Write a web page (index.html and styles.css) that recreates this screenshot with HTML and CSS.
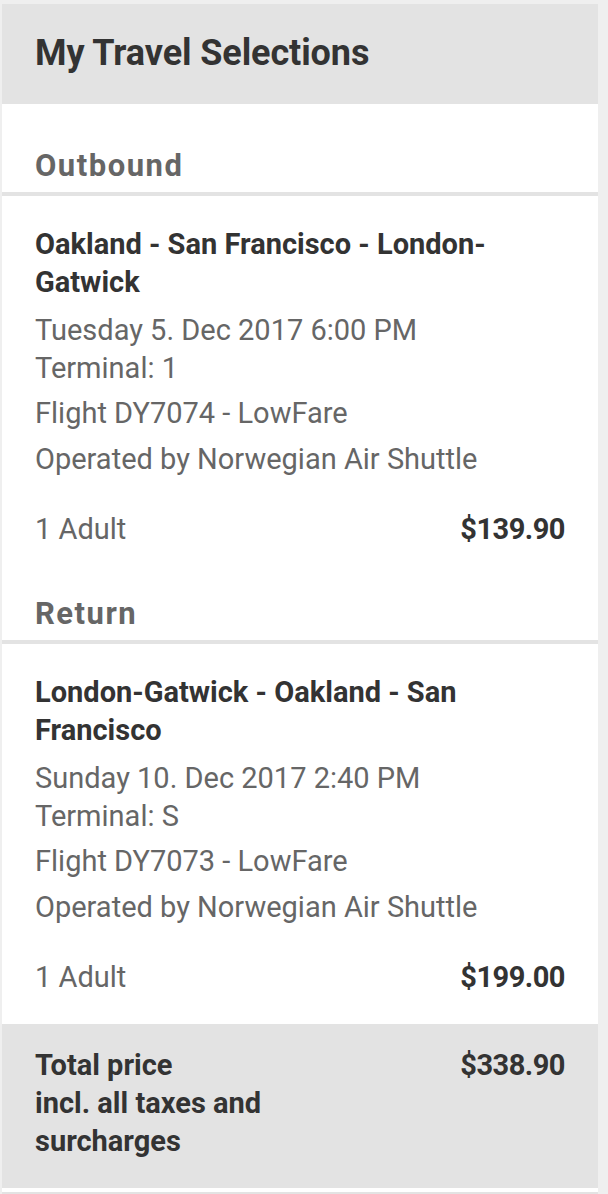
FILE: index.html
```html
<!DOCTYPE html>
<html lang="en">
<head>
<meta charset="utf-8">
<title>My Travel Selections</title>
<link rel="stylesheet" href="styles.css">
</head>
<body>
<div class="panel">
  <div class="panel-header">
    <h1 class="panel-title">My Travel Selections</h1>
  </div>

  <div class="leg-label">Outbound</div>
  <div class="leg">
    <div class="route">Oakland - San Francisco - London-Gatwick</div>
    <div class="detail when">Tuesday 5. Dec 2017 6:00 PM<br>Terminal: 1</div>
    <div class="detail flight">Flight DY7074 - LowFare</div>
    <div class="detail operator">Operated by Norwegian Air Shuttle</div>
    <div class="pax-row">
      <span class="pax">1 Adult</span>
      <span class="price">$139.90</span>
    </div>
  </div>

  <div class="leg-label">Return</div>
  <div class="leg leg-last">
    <div class="route">London-Gatwick - Oakland - San Francisco</div>
    <div class="detail when">Sunday 10. Dec 2017 2:40 PM<br>Terminal: S</div>
    <div class="detail flight">Flight DY7073 - LowFare</div>
    <div class="detail operator">Operated by Norwegian Air Shuttle</div>
    <div class="pax-row">
      <span class="pax">1 Adult</span>
      <span class="price">$199.00</span>
    </div>
  </div>

  <div class="total">
    <div class="total-label">Total price<br>incl. all taxes and surcharges</div>
    <div class="total-price">$338.90</div>
  </div>
  <div class="next-block"></div>
</div>
</body>
</html>
```

FILE: styles.css
```css
html, body {
  margin: 0;
  padding: 0;
  background: #efefef;
  font-family: Roboto, "Liberation Sans", sans-serif;
}

.panel {
  width: 596px;
  margin: 4px 0 0 2px;
  background: #ffffff;
}

.panel-header {
  background: #e3e3e3;
  padding: 31px 33px 33px;
}

.panel-title {
  margin: 0;
  font-size: 36px;
  line-height: 36px;
  font-weight: 700;
  color: #333333;
  letter-spacing: -0.1px;
}

.leg-label {
  padding: 44px 33px 8px;
  font-size: 31px;
  line-height: 36px;
  font-weight: 700;
  color: #666666;
  letter-spacing: 1.5px;
  border-bottom: 4px solid #e3e3e3;
}

.leg {
  padding: 29px 33px 4px;
}

.leg-last {
  padding-bottom: 28px;
}

.route {
  font-size: 29px;
  line-height: 38px;
  font-weight: 700;
  color: #333333;
  padding-right: 40px;
}

.detail {
  font-size: 29px;
  line-height: 38px;
  color: #666666;
}

.when {
  margin-top: 10px;
}

.flight {
  margin-top: 7px;
}

.operator {
  margin-top: 8px;
}

.pax-row {
  display: flex;
  justify-content: space-between;
  align-items: baseline;
  margin-top: 32px;
  font-size: 29px;
  line-height: 38px;
}

.pax {
  color: #666666;
}

.price {
  font-weight: 700;
  color: #333333;
  letter-spacing: -0.5px;
}

.total {
  display: flex;
  justify-content: space-between;
  align-items: flex-start;
  background: #e3e3e3;
  padding: 22px 33px 28px;
  font-size: 29px;
  line-height: 38px;
  font-weight: 700;
  color: #333333;
}

.total-label {
  width: 265px;
}

.total-price {
  letter-spacing: -0.5px;
}

.next-block {
  margin-top: 4px;
  height: 40px;
  background: #e3e3e3;
}
```
